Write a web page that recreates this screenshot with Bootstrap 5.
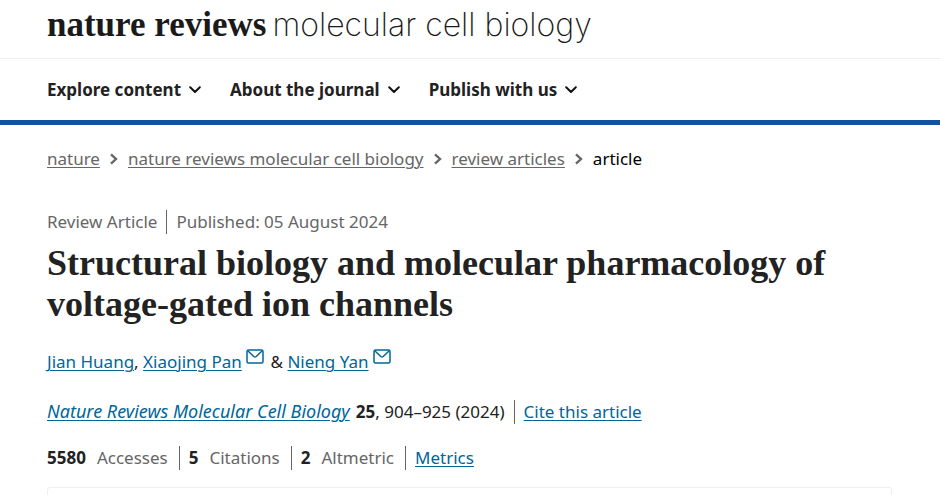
<!DOCTYPE html>
<html lang="en">
<head>
<meta charset="utf-8">
<meta name="viewport" content="width=device-width, initial-scale=1">
<title>Structural biology and molecular pharmacology of voltage-gated ion channels</title>
<link href="https://cdn.jsdelivr.net/npm/bootstrap@5.3.0/dist/css/bootstrap.min.css" rel="stylesheet">
<style>
body { font-family: "Noto Sans", sans-serif; font-size: 17px; line-height: 24px; color: #222; overflow-x: hidden; }
a { color: #069; text-underline-offset: 2px; text-decoration-thickness: 1px; }
.gutter { padding-left: 47px; padding-right: 48px; }
.brand-row { height: 59px; border-bottom: 1px solid #eee; }
.brand { color: #1a1a1a; line-height: 50px; white-space: nowrap; gap: 6px; }
.brand-strong { font-family: "Liberation Serif", serif; font-weight: 700; font-size: 35px; }
.brand-light { font-family: Inter, sans-serif; font-weight: 250; font-size: 32px; }
.journal-nav { height: 66px; border-bottom: 5px solid #174fa1; gap: 29px; }
.menu-btn { font-weight: 700; color: #222; gap: 8px; }
.crumbs { padding-top: 22px; gap: 9px; color: #666; }
.crumbs a { color: #666; }
.meta { padding-top: 39px; color: #666; }
.rule { border-left: 1px solid #666; margin-left: 9px; padding-left: 9px; }
.title { font-family: "Liberation Serif", serif; font-weight: 700; font-size: 36px; line-height: 41px; padding-top: 9px; }
.authors { padding-top: 24px; }
.mail { vertical-align: 4px; margin-right: 2px; }
.source { padding-top: 25px; }
.source-name { font-size: 18px; }
.vol { margin-left: 6px; }
.metrics { padding-top: 22px; }
.metrics .rule { margin-left: 11px; }
.metric-name { color: #666; margin-left: 11px; }
.panel { border: 1px solid #eee; border-radius: 3px; margin-top: 17px; height: 80px; }
.page { height: 100vh; overflow: hidden; }
</style>
</head>
<body>
<div class="page">
<header>
  <div class="brand-row gutter">
    <a class="brand d-inline-flex align-items-baseline text-decoration-none" href="#"><span class="brand-strong">nature reviews</span><span class="brand-light">molecular cell biology</span></a>
  </div>
  <nav class="journal-nav gutter d-flex align-items-center" aria-label="Journal">
    <button type="button" class="menu-btn bg-transparent border-0 p-0 d-flex align-items-center">Explore content <svg width="12" height="8" viewBox="0 0 12 8" fill="none" stroke="#111" stroke-width="2" stroke-linecap="round" stroke-linejoin="round" aria-hidden="true"><path d="M1.2 1.3 6 6l4.800-4.700"/></svg></button>
    <button type="button" class="menu-btn bg-transparent border-0 p-0 d-flex align-items-center">About the journal <svg width="12" height="8" viewBox="0 0 12 8" fill="none" stroke="#111" stroke-width="2" stroke-linecap="round" stroke-linejoin="round" aria-hidden="true"><path d="M1.2 1.3 6 6l4.800-4.700"/></svg></button>
    <button type="button" class="menu-btn bg-transparent border-0 p-0 d-flex align-items-center">Publish with us <svg width="12" height="8" viewBox="0 0 12 8" fill="none" stroke="#111" stroke-width="2" stroke-linecap="round" stroke-linejoin="round" aria-hidden="true"><path d="M1.2 1.3 6 6l4.800-4.700"/></svg></button>
  </nav>
</header>
<main class="gutter">
  <nav class="crumbs d-flex align-items-center" aria-label="Breadcrumb">
    <a href="#">nature</a>
    <svg width="10" height="12" viewBox="0 0 10 12" fill="none" stroke="#666" stroke-width="2.400" aria-hidden="true"><path d="m2 1.300 5 4.700-5 4.700"/></svg>
    <a href="#">nature reviews molecular cell biology</a>
    <svg width="10" height="12" viewBox="0 0 10 12" fill="none" stroke="#666" stroke-width="2.400" aria-hidden="true"><path d="m2 1.300 5 4.700-5 4.700"/></svg>
    <a href="#">review articles</a>
    <svg width="10" height="12" viewBox="0 0 10 12" fill="none" stroke="#666" stroke-width="2.400" aria-hidden="true"><path d="m2 1.300 5 4.700-5 4.700"/></svg>
    <span class="text-black">article</span>
  </nav>
  <div class="meta d-flex"><span>Review Article</span><span class="rule">Published: 05 August 2024</span></div>
  <h1 class="title mb-0">Structural biology and molecular pharmacology of voltage-gated ion channels</h1>
  <div class="authors"><a href="#">Jian Huang</a>, <a href="#">Xiaojing Pan</a> <a href="#" aria-label="Email Xiaojing Pan"><svg class="mail" width="18" height="15" viewBox="0 0 18 15" fill="none" stroke="#069" stroke-width="1.500" stroke-linejoin="round" aria-hidden="true"><rect x="1" y="1" width="16" height="13" rx="1.500"/><path d="m2 2 5.800 5.500q1.200 1 2.400 0L16 2"/></svg></a> &amp; <a href="#">Nieng Yan</a> <a href="#" aria-label="Email Nieng Yan"><svg class="mail" width="18" height="15" viewBox="0 0 18 15" fill="none" stroke="#069" stroke-width="1.500" stroke-linejoin="round" aria-hidden="true"><rect x="1" y="1" width="16" height="13" rx="1.500"/><path d="m2 2 5.800 5.500q1.200 1 2.400 0L16 2"/></svg></a></div>
  <div class="source d-flex align-items-baseline"><a class="source-name" href="#"><i>Nature Reviews Molecular Cell Biology</i></a><span class="vol"><b>25</b>, 904–925 (2024)</span><span class="rule"><a href="#">Cite this article</a></span></div>
  <div class="metrics d-flex"><span><b>5580</b><span class="metric-name">Accesses</span></span><span class="rule"><b>5</b><span class="metric-name">Citations</span></span><span class="rule"><b>2</b><span class="metric-name">Altmetric</span></span><span class="rule"><a href="#">Metrics</a></span></div>
  <section class="panel" aria-label="Access"></section>
</main>
</div>
<script src="https://cdn.jsdelivr.net/npm/bootstrap@5.3.0/dist/js/bootstrap.bundle.min.js"></script>
</body>
</html>
